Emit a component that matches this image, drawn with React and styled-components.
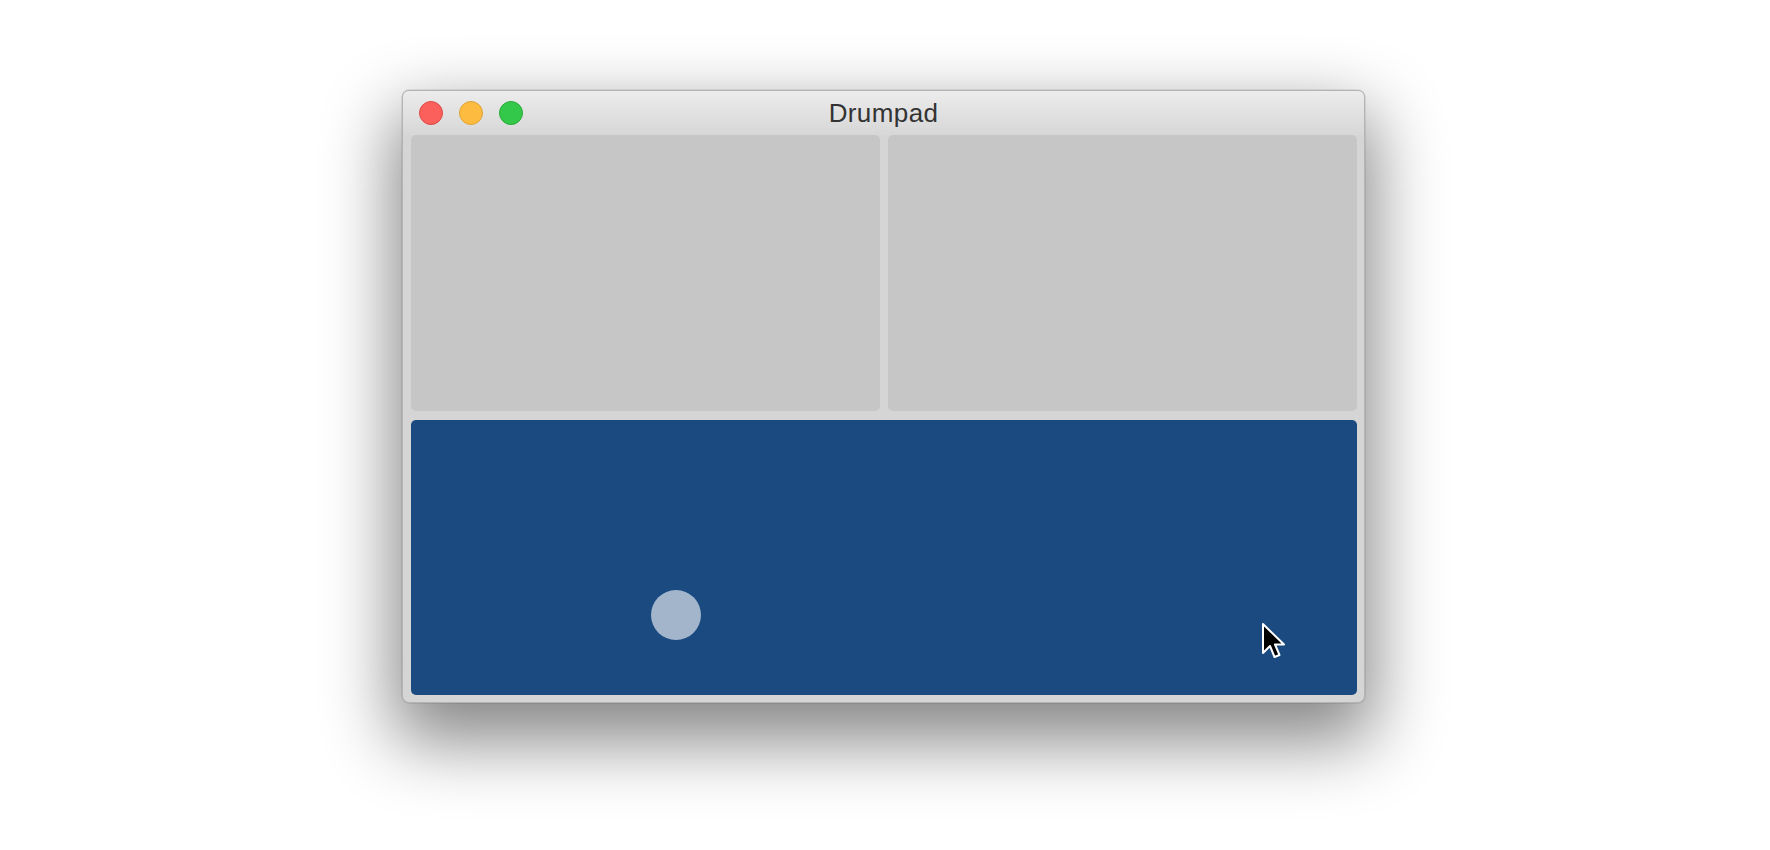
import React from "react";
import styled, { createGlobalStyle } from "styled-components";

const GlobalStyle = createGlobalStyle`
  html, body {
    margin: 0;
    padding: 0;
    background: #ffffff;
    font-family: "Liberation Sans", Arial, sans-serif;
  }
`;

const Desktop = styled.div`
  width: 1770px;
  height: 850px;
  padding: 90px 0 0 402px;
  box-sizing: border-box;
  overflow: hidden;
`;

const Window = styled.div`
  width: 963px;
  height: 613px;
  box-sizing: border-box;
  border: 1px solid #b4b4b4;
  border-radius: 7px;
  background: #d5d5d5;
  overflow: hidden;
  display: flex;
  flex-direction: column;
  box-shadow: 0 30px 70px 8px rgba(0, 0, 0, 0.48), 0 0 0 0.5px rgba(0, 0, 0, 0.15);
`;

const TitleBar = styled.div`
  height: 44px;
  flex: none;
  display: flex;
  align-items: center;
  position: relative;
  padding-left: 16px;
  background: linear-gradient(to bottom, #ececec, #d7d7d7);
`;

const Lights = styled.div`
  display: flex;
  gap: 16px;
`;

const Light = styled.span`
  width: 24px;
  height: 24px;
  border-radius: 50%;
  box-sizing: border-box;
  background: ${(p) => p.$fill};
  border: 1px solid ${(p) => p.$edge};
`;

const Title = styled.div`
  position: absolute;
  left: 0;
  right: 0;
  text-align: center;
  font-size: 26px;
  color: #333333;
  letter-spacing: 0.4px;
`;

const Content = styled.div`
  flex: 1;
  display: grid;
  grid-template-columns: 1fr 1fr;
  grid-template-rows: 276px 1fr;
  gap: 9px 8px;
  padding: 0 7px 7px 8px;
`;

const GrayPad = styled.div`
  background: #c6c6c6;
  border-radius: 5px;
`;

const BluePad = styled.div`
  grid-column: 1 / span 2;
  background: #1a4a80;
  border-radius: 5px;
  position: relative;
`;

const Touch = styled.div`
  position: absolute;
  left: 240px;
  top: 170px;
  width: 50px;
  height: 50px;
  border-radius: 50%;
  background: #a3b5cb;
`;

const Cursor = styled.svg`
  position: absolute;
  left: 849px;
  top: 201px;
`;

export default function App() {
  return (
    <>
      <GlobalStyle />
      <Desktop>
        <Window>
          <TitleBar>
            <Lights>
              <Light $fill="#fc605c" $edge="#de4a45" />
              <Light $fill="#fdbc40" $edge="#dea236" />
              <Light $fill="#34c84a" $edge="#27aa35" />
            </Lights>
            <Title>Drumpad</Title>
          </TitleBar>
          <Content>
            <GrayPad />
            <GrayPad />
            <BluePad>
              <Touch />
              <Cursor width="28" height="40" viewBox="0 0 28 40">
                <path
                  d="M3 3 V32 L10 25 L14.5 36 L19.5 34 L15 23.5 H24 Z"
                  fill="#000"
                  stroke="#fff"
                  strokeWidth="2"
                  strokeLinejoin="round"
                />
              </Cursor>
            </BluePad>
          </Content>
        </Window>
      </Desktop>
    </>
  );
}
